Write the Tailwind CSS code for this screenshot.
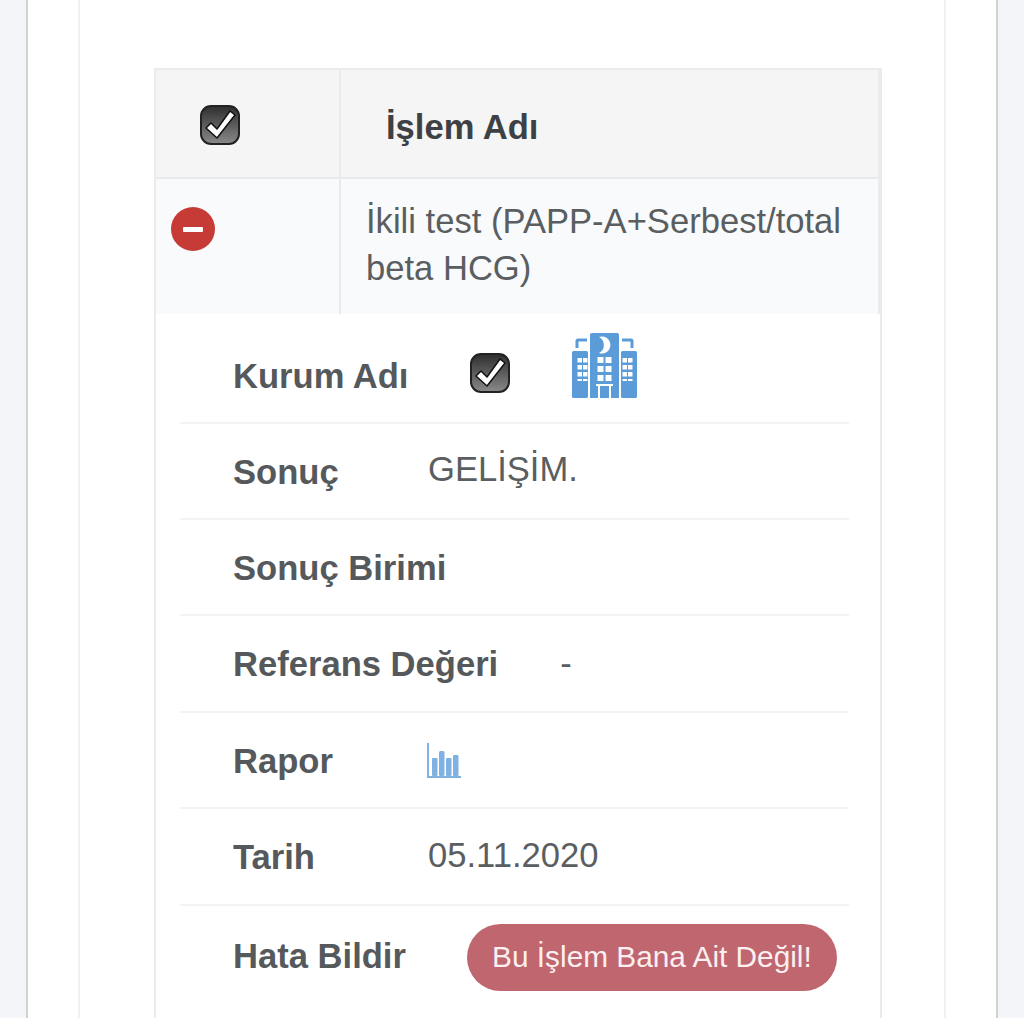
<!DOCTYPE html>
<html lang="tr">
<head>
  <meta charset="UTF-8" />
  <meta name="viewport" content="width=device-width, initial-scale=1.0"/>
  <title>İşlemler</title>
  <script src="https://cdn.jsdelivr.net/npm/@tailwindcss/browser@4"></script>
</head>
<body class="bg-[#f3f5f9] h-[1018px] overflow-hidden font-['Liberation_Sans',Arial,sans-serif] text-[#55595c]">
  <div class="ml-[26px] w-[972px] h-[1018px] bg-white border-x-2 border-[#cfd1d4] pl-[50px] pr-[50px]">
    <div class="h-[1018px] border-x-2 border-[#eef0f2] pt-[68px] pl-[74px] pr-[63px]">
      <div class="w-[728px] h-[950px] border-x-2 border-t-2 border-[#e9ebec]">
        <!-- header -->
        <div class="flex h-[109px] bg-[#f5f5f5] border-b-2 border-r-2 border-b-[#e6ecee] border-r-[#e9ebec]">
          <div class="w-[185px] shrink-0 pl-[44px] pt-[35px] border-r-2 border-[#e6ecee]">
            <svg class="w-10 h-10" viewBox="0 0 40 40">
              <defs><linearGradient id="cb1" x1="0" y1="0" x2="0" y2="1"><stop offset="0" stop-color="#2e2e2e"/><stop offset="1" stop-color="#8a8a8a"/></linearGradient></defs>
              <rect x="1" y="1" width="38" height="38" rx="10" fill="url(#cb1)" stroke="#222" stroke-width="2"/>
              <path d="M6 23l5-5 6 6L30 6l5 4-18 23z" fill="#fff" stroke="#111" stroke-width="1.5" stroke-linejoin="round"/>
            </svg>
          </div>
          <div class="pl-[45px] pt-[35px] text-[34.6px] leading-[44px] font-bold text-[#3d4144]">İşlem Adı</div>
        </div>
        <!-- row -->
        <div class="flex h-[135px] bg-[#f9fafc] border-r-2 border-[#e9ebec]">
          <div class="w-[185px] shrink-0 pl-[15px] pt-[28px] border-r-2 border-[#e6ecee]">
            <div class="w-[44px] h-[44px] rounded-full bg-[#c73b36] flex items-center justify-center">
              <div class="w-[20px] h-[5px] bg-white rounded-[1px]"></div>
            </div>
          </div>
          <div class="pl-[25px] pr-[30px] pt-[19px] text-[34.6px] leading-[47px] text-[#5a5e61]">İkili test (PAPP-A+Serbest/total beta HCG)</div>
        </div>
        <!-- details -->
        <div class="pl-[24px]">
          <div class="w-[669px] h-[110px] flex border-b-2 border-[#f2f3f4]">
            <div class="pl-[53px] pt-[39px] text-[34.6px] leading-[46px] font-bold">Kurum Adı</div>
            <svg class="ml-[62px] mt-[39px] w-10 h-10" viewBox="0 0 40 40">
              <defs><linearGradient id="cb2" x1="0" y1="0" x2="0" y2="1"><stop offset="0" stop-color="#2e2e2e"/><stop offset="1" stop-color="#8a8a8a"/></linearGradient></defs>
              <rect x="1" y="1" width="38" height="38" rx="10" fill="url(#cb2)" stroke="#222" stroke-width="2"/>
              <path d="M6 23l5-5 6 6L30 6l5 4-18 23z" fill="#fff" stroke="#111" stroke-width="1.5" stroke-linejoin="round"/>
            </svg>
            <svg class="ml-[62px] mt-[19px] w-[66px] h-[66px]" viewBox="0 0 66 66" fill="#5b9bd8">
              <path d="M18 2a2 2 0 0 1 2-2h25a2 2 0 0 1 2 2v63H18z"/>
              <rect x="0" y="18" width="16" height="47" rx="1.5"/>
              <rect x="49" y="18" width="16" height="47" rx="1.5"/>
              <path d="M5 15V8a1 1 0 0 1 1-1h9M60 15V8a1 1 0 0 0-1-1H50" fill="none" stroke="#5b9bd8" stroke-width="3"/>
              <path d="M27 4A8.5 8.5 0 1 1 27 20A9 9 0 0 0 27 4z" fill="#fff"/>
              <g fill="#fff">
                <rect x="25.5" y="24" width="6" height="6"/><rect x="33.5" y="24" width="6" height="6"/>
                <rect x="25.5" y="33" width="6" height="6"/><rect x="33.5" y="33" width="6" height="6"/>
                <rect x="25.5" y="42" width="6" height="6"/><rect x="33.5" y="42" width="6" height="6"/>
                <rect x="5.5" y="25" width="4.5" height="4.5"/><rect x="11" y="25" width="4.5" height="4.5"/>
                <rect x="5.5" y="32" width="4.5" height="4.5"/><rect x="11" y="32" width="4.5" height="4.5"/>
                <rect x="5.5" y="39" width="4.5" height="4.5"/><rect x="11" y="39" width="4.5" height="4.5"/>
                <rect x="5.5" y="46" width="4.5" height="2"/><rect x="11" y="46" width="4.5" height="2"/>
                <rect x="50.5" y="25" width="4.5" height="4.5"/><rect x="56" y="25" width="4.5" height="4.5"/>
                <rect x="50.5" y="32" width="4.5" height="4.5"/><rect x="56" y="32" width="4.5" height="4.5"/>
                <rect x="50.5" y="39" width="4.5" height="4.5"/><rect x="56" y="39" width="4.5" height="4.5"/>
                <rect x="50.5" y="46" width="4.5" height="2"/><rect x="56" y="46" width="4.5" height="2"/>
                <path d="M24 51h17v2h-2v12h-2V53h-9v12h-2V53h-2z"/>
              </g>
            </svg>
          </div>
          <div class="w-[669px] h-[96px] flex border-b-2 border-[#f2f3f4]">
            <div class="w-[248px] shrink-0 pl-[53px] pt-[25px] text-[34.6px] leading-[46px] font-bold">Sonuç</div>
            <div class="pt-[22px] text-[34.6px] leading-[46px] text-[#5a5e61]">GELİŞİM.</div>
          </div>
          <div class="w-[669px] h-[96px] flex border-b-2 border-[#f2f3f4]">
            <div class="pl-[53px] pt-[25px] text-[34.6px] leading-[46px] font-bold">Sonuç Birimi</div>
          </div>
          <div class="w-[669px] h-[97px] flex border-b-2 border-[#f2f3f4]">
            <div class="pl-[53px] pt-[25px] text-[34.6px] leading-[46px] font-bold">Referans Değeri</div>
            <div class="pl-[62px] pt-[24px] text-[34.6px] leading-[46px] text-[#5a5e61]">-</div>
          </div>
          <div class="w-[669px] h-[96px] flex border-b-2 border-[#f2f3f4]">
            <div class="w-[247px] shrink-0 pl-[53px] pt-[25px] text-[34.6px] leading-[46px] font-bold">Rapor</div>
            <svg class="mt-[30px] w-[34px] h-[36px]" viewBox="0 0 34 36" fill="#7fb2e3">
              <rect x="0" y="0" width="2" height="35"/>
              <rect x="0" y="33" width="34" height="2"/>
              <rect x="5" y="15" width="5.5" height="18" rx="1"/>
              <rect x="12" y="8" width="5.5" height="25" rx="1.5"/>
              <rect x="19" y="15" width="5.5" height="18" rx="1"/>
              <rect x="26" y="12" width="5.5" height="21" rx="1"/>
            </svg>
          </div>
          <div class="w-[669px] h-[97px] flex border-b-2 border-[#f2f3f4]">
            <div class="w-[248px] shrink-0 pl-[53px] pt-[25px] text-[34.6px] leading-[46px] font-bold">Tarih</div>
            <div class="pt-[23px] text-[34.6px] leading-[46px] text-[#5a5e61]">05.11.2020</div>
          </div>
          <div class="w-[669px] flex">
            <div class="pl-[53px] pt-[27px] text-[34.6px] leading-[46px] font-bold">Hata Bildir</div>
            <div class="ml-[61px] mt-[18px] w-[370px] h-[67px] rounded-full bg-[#bf666f] flex items-center justify-center text-[29.8px] text-[#fbeff0]">Bu İşlem Bana Ait Değil!</div>
          </div>
        </div>
      </div>
    </div>
  </div>
</body>
</html>
